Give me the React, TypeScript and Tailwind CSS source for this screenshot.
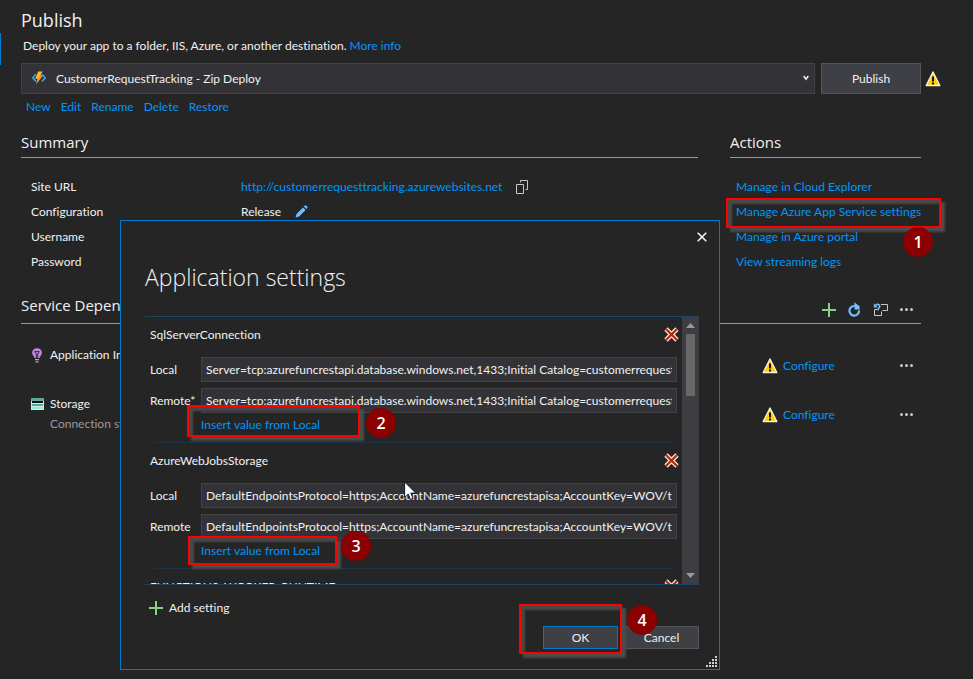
import { useState } from 'react';
import type { ReactNode } from 'react';

const profileLinks = ['New', 'Edit', 'Rename', 'Delete', 'Restore'];

const settings = [
  {
    name: 'SqlServerConnection',
    value:
      'Server=tcp:azurefuncrestapi.database.windows.net,1433;Initial Catalog=customerrequest',
    changed: true,
  },
  {
    name: 'AzureWebJobsStorage',
    value:
      'DefaultEndpointsProtocol=https;AccountName=azurefuncrestapisa;AccountKey=WOV/t',
    changed: false,
  },
];

function Link({ children }: { children: ReactNode }) {
  return (
    <a href="#" className="whitespace-nowrap text-[#0097fb] hover:underline">
      {children}
    </a>
  );
}

function WarningIcon() {
  return (
    <svg width="16" height="16" viewBox="0 0 16 16" className="shrink-0" aria-hidden="true">
      <path d="M8 1 14.8 14.500H1.200Z" fill="#ffcc00" stroke="#f5f1e0" strokeWidth="1.400" strokeLinejoin="round" />
      <path d="M7 5.500h2v5H7zM7 11.500h2v2H7z" fill="#111" />
    </svg>
  );
}

function FunctionIcon() {
  return (
    <svg width="14" height="14" viewBox="0 0 14 14" aria-hidden="true">
      <path d="M4 3.2.8 6.8 4 10.4M10 3.2l3.2 3.6L10 10.4" fill="none" stroke="#3aa0e0" strokeWidth="1.7" />
      <path d="M6.2.4h4.4L8.3 4.6h2.6L4.2 13l1.5-5.2H3.2Z" fill="#fdb833" />
      <path d="m8.3 4.6h2.6L4.2 13l2.9-6Z" fill="#f08c1a" />
    </svg>
  );
}

function CopyIcon() {
  return (
    <svg width="12" height="14" viewBox="0 0 12 14" fill="none" stroke="#c8c8c8" aria-hidden="true">
      <path d="M.5 4.5h7v9h-7zM4.5 2.500V.5h7v9H9.500" />
    </svg>
  );
}

function PencilIcon() {
  return (
    <svg width="13" height="13" viewBox="0 0 13 13" fill="#75bfff" aria-hidden="true">
      <path d="m.6 12.400.9-3.500L8 2.400l2.600 2.600-6.500 6.500ZM8.800 1.600 9.900.5h1.300l1.200 1.200v1.200l-1 1.200Z" />
    </svg>
  );
}

function PlusIcon() {
  return (
    <svg width="14" height="14" viewBox="0 0 14 14" aria-hidden="true">
      <path d="M6 0h2v6h6v2H8v6H6V8H0V6h6Z" fill="#89d185" />
    </svg>
  );
}

function RefreshIcon() {
  return (
    <svg width="13" height="15" viewBox="0 0 13 15" aria-hidden="true">
      <path d="M11 8.300A4.800 4.800 0 1 1 6.200 4H8" fill="none" stroke="#75bfff" strokeWidth="2.200" />
      <path d="M6.200.2 11.600 4.300V7.600H6.600V5Z" fill="#75bfff" />
    </svg>
  );
}

function SwapIcon() {
  return (
    <svg width="15" height="14" viewBox="0 0 15 14" fill="none" aria-hidden="true">
      <path d="M8 1.500h6.500v6H9.500M4 6.500H1.500v6h7v-4" stroke="#c8c8c8" />
      <path d="M2.500 2.200C4.500.8 7 1.400 6.700 3.500 6.500 5 5 5.400 4.800 7.500" stroke="#75bfff" strokeWidth="1.600" />
      <path d="M.8.3v4.200h4Z" fill="#75bfff" />
    </svg>
  );
}

function DotsIcon() {
  return (
    <svg width="13" height="3" viewBox="0 0 13 3" fill="#c8c8c8" aria-hidden="true">
      <circle cx="1.500" cy="1.500" r="1.500" />
      <circle cx="6.500" cy="1.500" r="1.500" />
      <circle cx="11.500" cy="1.500" r="1.500" />
    </svg>
  );
}

function BulbIcon() {
  return (
    <svg width="12" height="15" viewBox="0 0 12 15" aria-hidden="true">
      <path d="M6 .2a4.800 4.800 0 0 1 4.900 4.900C10.900 7 9 8 8.600 10H3.400C3 8 1.100 7 1.100 5.100A4.800 4.800 0 0 1 6 .2Z" fill="#c586e0" />
      <path d="M3.600 3.600h4.800L6.700 6v3.500H5.300V6Z" fill="none" stroke="#3c2545" />
      <path d="M4 11h4v1.200H4zM4.500 13.200h3v1.200h-3z" fill="#b9a0c4" />
    </svg>
  );
}

function StorageIcon() {
  return (
    <svg width="13" height="12" viewBox="0 0 13 12" aria-hidden="true">
      <path d="M0 0h13v12H0z" fill="#d8e6e4" />
      <path d="M0 0h13v3H0z" fill="#5fa59b" />
      <path d="M1 3h11v2H1z" fill="#0c1414" />
      <path d="M1 6h11v2H1z" fill="#5fa59b" />
      <path d="M1 9h11v2H1z" fill="#86f0e4" />
    </svg>
  );
}

function RemoveIcon() {
  return (
    <svg width="15" height="15" viewBox="0 0 15 15" fill="none" aria-hidden="true">
      <path d="m2 2 11 11M13 2 2 13" stroke="#f0e4dc" strokeWidth="4.600" />
      <path d="m2 2 11 11M13 2 2 13" stroke="#b5290f" strokeWidth="2.200" />
    </svg>
  );
}

function Highlight({ className }: { className: string }) {
  return (
    <span
      className={`pointer-events-none absolute border-2 border-[#ff0000] shadow-[inset_4px_4px_2px_#484848,4px_4px_2px_#4c4c4c] ${className}`}
    />
  );
}

function Step({ n, className }: { n: number; className: string }) {
  return (
    <span
      className={`pointer-events-none absolute flex size-[30px] items-center justify-center rounded-full bg-[#8b0000] font-['Open_Sans',sans-serif] text-base font-semibold text-white ${className}`}
    >
      {n}
    </span>
  );
}

function SummaryRow({ label, children }: { label: string; children?: ReactNode }) {
  return (
    <div className="flex h-[25px] items-center pl-2.5">
      <dt className="w-[210px] shrink-0">{label}</dt>
      <dd className="flex items-center">{children}</dd>
    </div>
  );
}

function ServiceRow({ icon, name, detail }: { icon: ReactNode; name: string; detail?: string }) {
  return (
    <li className="flex h-[49px] items-center">
      <div className="flex flex-1 self-start pt-1 pl-2.5">
        <span className="flex h-5 w-[19px] items-center">{icon}</span>
        <div>
          <p>{name}</p>
          {detail && <p className="text-[#999999]">{detail}</p>}
        </div>
      </div>
      <div className="flex w-[138px] items-center gap-[5px]">
        <WarningIcon />
        <Link>Configure</Link>
      </div>
      <button type="button" aria-label={`${name} options`} className="mr-2">
        <DotsIcon />
      </button>
    </li>
  );
}

function SettingHeader({ name }: { name: string }) {
  return (
    <div className="flex h-[35px] items-center justify-between pr-[3px]">
      <h3>{name}</h3>
      <button type="button" aria-label={`Remove ${name}`}>
        <RemoveIcon />
      </button>
    </div>
  );
}

function SettingGroup({ name, value, changed }: { name: string; value: string; changed: boolean }) {
  const field =
    'h-[25px] min-w-0 flex-1 border border-[#434346] bg-[#333337] px-1 text-[#f1f1f1] outline-none focus:border-[#007acc]';

  return (
    <section className="relative h-[126px]">
      <SettingHeader name={name} />
      <div className="mt-[5px] mr-[5px] flex items-center">
        <label htmlFor={`${name}-local`} className="w-[51px]">
          Local
        </label>
        <input id={`${name}-local`} type="text" defaultValue={value} className={field} />
      </div>
      <div className="mt-1.5 mr-[5px] flex items-center">
        <label htmlFor={`${name}-remote`} className="w-[51px]">
          {changed ? 'Remote*' : 'Remote'}
        </label>
        <input id={`${name}-remote`} type="text" defaultValue={value} className={field} />
      </div>
      <div className="mt-0.5 pl-[51px]">
        <Link>Insert value from Local</Link>
      </div>
      <hr className="absolute right-2 bottom-0 left-1 border-[#1b3448]" />
    </section>
  );
}

function SettingsDialog({ onClose }: { onClose: () => void }) {
  return (
    <div
      role="dialog"
      aria-labelledby="dialog-title"
      className="absolute top-[220px] left-[120px] w-[600px] border border-[#007acc] bg-[#252526] px-5 pb-5"
    >
      <button
        type="button"
        aria-label="Close"
        onClick={onClose}
        className="absolute top-[11px] right-3"
      >
        <svg width="10" height="10" viewBox="0 0 10 10" stroke="#f1f1f1" strokeWidth="1.600" aria-hidden="true">
          <path d="m.7.7 8.600 8.600M9.300.7.7 9.300" />
        </svg>
      </button>

      <h2
        id="dialog-title"
        className="mt-10 ml-1 font-['Open_Sans',sans-serif] text-[23px] leading-8 font-light"
      >
        Application settings
      </h2>

      <div className="relative mt-[23px] ml-1">
        <div className="flex h-[269px] overflow-hidden border-y border-[#1a4766]">
          <div className="min-w-0 flex-1 pl-[5px]">
            {settings.map((s) => (
              <SettingGroup key={s.name} {...s} />
            ))}
            <SettingHeader name="FUNCTIONS_WORKER_RUNTIME" />
          </div>
          <div className="flex w-[17px] flex-col items-center justify-between bg-[#3e3e42] py-1.5">
            <div className="flex flex-col items-center gap-1.5">
              <svg width="9" height="5" viewBox="0 0 9 5" fill="#999999" aria-hidden="true">
                <path d="M4.500 0 9 5H0Z" />
              </svg>
              <div className="h-[62px] w-[9px] bg-[#686868]" />
            </div>
            <svg width="9" height="5" viewBox="0 0 9 5" fill="#999999" aria-hidden="true">
              <path d="M4.500 5 9 0H0Z" />
            </svg>
          </div>
        </div>

        <Highlight className="top-[89px] left-[42px] h-[32px] w-[173px]" />
        <Step n={2} className="top-[92px] left-[221px]" />
        <Highlight className="top-[220px] left-[43px] h-[29px] w-[149px]" />
        <Step n={3} className="top-[215px] left-[196px]" />
        <svg width="13" height="20" viewBox="0 0 13 20" className="absolute top-[165px] left-[259px]" aria-hidden="true">
          <path d="M.6 1v15.500l3.600-3.400 2.300 5.400 2.600-1.100-2.300-5.300h5Z" fill="#fff" stroke="#15152a" />
        </svg>
      </div>

      <button type="button" className="mt-[13px] ml-2 flex items-center gap-1.5">
        <PlusIcon />
        Add setting
      </button>

      <div className="relative mt-2 flex justify-end gap-1.5">
        <button
          type="button"
          onClick={onClose}
          className="h-[23px] w-[75px] border border-[#007acc] bg-[#3f3f46]"
        >
          OK
        </button>
        <button
          type="button"
          onClick={onClose}
          className="h-[23px] w-[75px] border border-[#555555] bg-[#3f3f46]"
        >
          Cancel
        </button>
        <span className="pointer-events-none absolute -top-[22px] right-[77px] h-[50px] w-[103px] border-2 border-[#ff0000] shadow-[inset_4px_4px_2px_#484848,4px_4px_2px_#4c4c4c]" />
        <Step n={4} className="-top-[21px] right-[42px]" />
      </div>

      <svg width="12" height="12" viewBox="0 0 12 12" fill="#d0d0d0" className="absolute right-px bottom-px" aria-hidden="true">
        <path d="M9 0h2v2H9zM6 3h2v2H6zM9 3h2v2H9zM3 6h2v2H3zM6 6h2v2H6zM9 6h2v2H9zM0 9h2v2H0zM3 9h2v2H3zM6 9h2v2H6zM9 9h2v2H9z" />
      </svg>
    </div>
  );
}

export default function App() {
  const [open, setOpen] = useState(true);

  return (
    <main className="relative min-h-screen bg-[#252526] pt-1.5 pr-8 pl-[21px] font-['Lato','Open_Sans',sans-serif] text-xs leading-5 text-[#f1f1f1] [font-variant-ligatures:none]">
      <div className="absolute top-[33px] left-0 h-8 w-px bg-[#007acc]" />

      <h1 className="font-['Open_Sans',sans-serif] text-lg leading-7">Publish</h1>
      <p className="mt-0.5 ml-0.5">
        Deploy your app to a folder, IIS, Azure, or another destination. <Link>More info</Link>
      </p>

      <div className="mt-[7px] flex items-center">
        <div className="relative flex-1">
          <span className="absolute top-2 left-[11px]">
            <FunctionIcon />
          </span>
          <select
            aria-label="Publish profile"
            className="block h-[31px] w-full appearance-none border border-[#434346] bg-[#333337] pl-[34px]"
          >
            <option>CustomerRequestTracking - Zip Deploy</option>
          </select>
          <svg width="6" height="6" viewBox="0 0 6 6" className="absolute top-3 right-1.5" aria-hidden="true">
            <path d="m.7 1 2.300 3.200L5.300 1" fill="none" stroke="#f1f1f1" strokeWidth="1.500" />
          </svg>
        </div>
        <button
          type="button"
          className="mr-1 ml-1.5 h-[31px] w-[100px] border border-[#555555] bg-[#3f3f46]"
        >
          Publish
        </button>
        <WarningIcon />
      </div>

      <nav className="mt-[3px] ml-[5px] flex gap-2.5">
        {profileLinks.map((l) => (
          <Link key={l}>{l}</Link>
        ))}
      </nav>

      <div className="mt-[13px] mr-5 flex gap-8">
        <section className="min-w-0 flex-1">
          <h2 className="border-b border-[#999999] pb-[3px] font-['Open_Sans',sans-serif] text-[15px] leading-6">
            Summary
          </h2>
          <dl className="mt-4">
            <SummaryRow label="Site URL">
              <Link>http://customerrequesttracking.azurewebsites.net</Link>
              <button type="button" aria-label="Copy URL" className="ml-3.5">
                <CopyIcon />
              </button>
            </SummaryRow>
            <SummaryRow label="Configuration">
              Release
              <button type="button" aria-label="Edit configuration" className="ml-3.5">
                <PencilIcon />
              </button>
            </SummaryRow>
            <SummaryRow label="Username" />
            <SummaryRow label="Password" />
          </dl>
        </section>

        <section className="relative w-[191px]">
          <h2 className="border-b border-[#999999] pb-[3px] font-['Open_Sans',sans-serif] text-[15px] leading-6">
            Actions
          </h2>
          <Highlight className="top-[68px] -left-1 h-[30px] w-[215px]" />
          <ul className="relative mt-4 pl-1.5 leading-[25px]">
            <li>
              <Link>Manage in Cloud Explorer</Link>
            </li>
            <li>
              <Link>Manage Azure App Service settings</Link>
            </li>
            <li>
              <Link>Manage in Azure portal</Link>
            </li>
            <li>
              <Link>View streaming logs</Link>
            </li>
          </ul>
          <Step n={1} className="top-[97px] left-[173px]" />
        </section>
      </div>

      <section className="mt-[19px] mr-5">
        <div className="flex items-end justify-between border-b border-[#999999] pr-2 pb-1.5">
          <h2 className="font-['Open_Sans',sans-serif] text-[15px] leading-6">
            Service Dependencies
          </h2>
          <div className="flex items-center gap-3">
            <button type="button" aria-label="Add dependency">
              <PlusIcon />
            </button>
            <button type="button" aria-label="Refresh">
              <RefreshIcon />
            </button>
            <button type="button" aria-label="Restore dependencies">
              <SwapIcon />
            </button>
            <button type="button" aria-label="More options">
              <DotsIcon />
            </button>
          </div>
        </div>
        <ul className="mt-[17px]">
          <ServiceRow icon={<BulbIcon />} name="Application Insights" />
          <ServiceRow icon={<StorageIcon />} name="Storage" detail="Connection string" />
        </ul>
      </section>

      {open && <SettingsDialog onClose={() => setOpen(false)} />}
    </main>
  );
}
